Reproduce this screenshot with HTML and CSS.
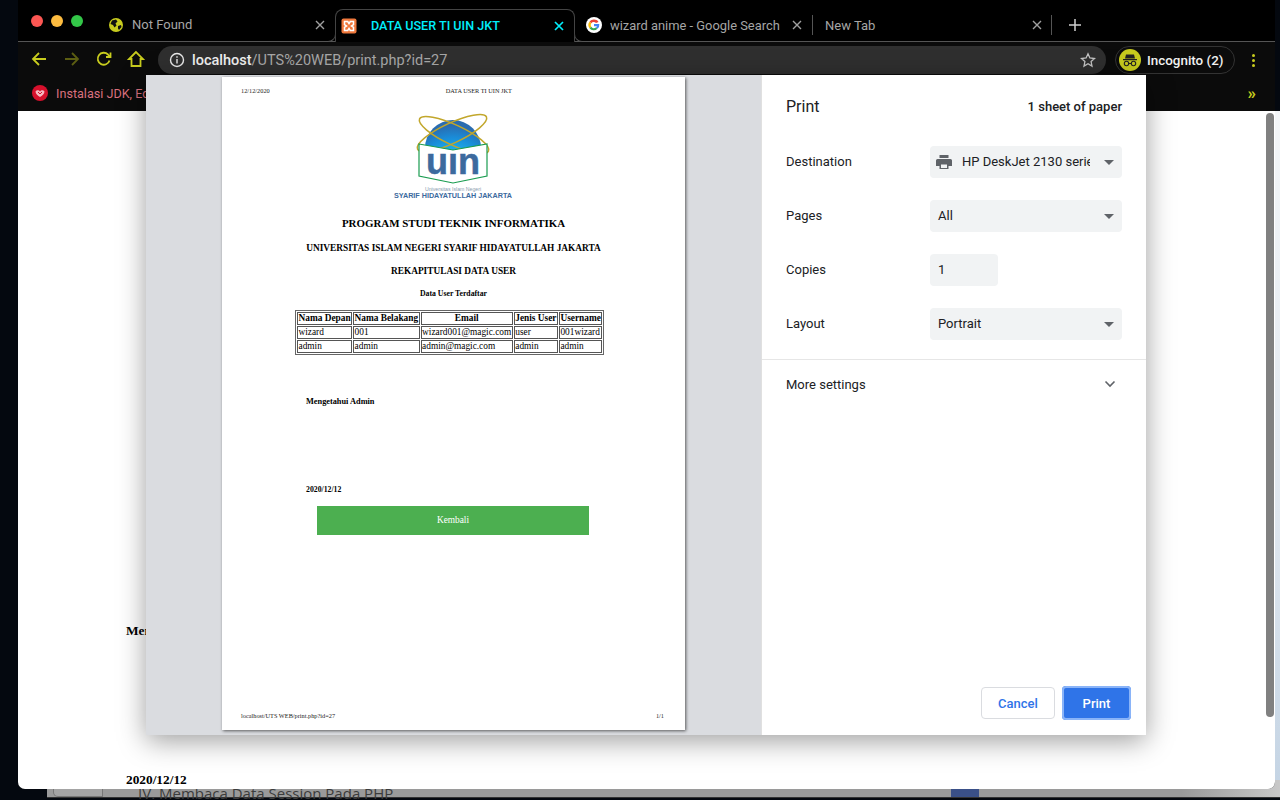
FILE: index.html
```html
<!DOCTYPE html>
<html lang="id">
<head>
<meta charset="utf-8">
<title>DATA USER TI UIN JKT</title>
<link rel="stylesheet" href="styles.css">
</head>
<body>
<div class="desktop">
  <div class="edge-light"></div>
  <div class="behind">
    <div class="behind-side"></div>
    <div class="behind-title">IV. Membaca Data Session Pada PHP</div>
    <div class="behind-blue"></div>
  </div>

  <div class="window">
    <div class="tabstrip">
      <div class="lights"><i class="light red"></i><i class="light amber"></i><i class="light green"></i></div>
      <div class="tab tab-first">
        <svg class="favicon" viewBox="0 0 16 16"><circle cx="8" cy="8" r="7" fill="#c8cc1e"/><path d="M4 3.500l4-1 1.500 2-2 2 1 2-2 2-1.500-2.500-2.500-1zM10 9l3-1 .5 2-2.500 3-1-1.500z" fill="#111"/></svg>
        <span class="tab-title">Not Found</span>
        <svg class="close" viewBox="0 0 10 10"><path d="M1 1l8 8M9 1l-8 8"/></svg>
      </div>
      <div class="tab tab-active">
        <svg class="favicon" viewBox="0 0 16 16"><rect x="0.500" y="0.500" width="15" height="15" rx="2" fill="#f0783c"/><path d="M3.500 3.500h3.200L8 5.500l1.300-2h3.200v3.200L10.500 8l2 1.300v3.200H9.300L8 10.500l-1.300 2H3.500V9.300L5.500 8l-2-1.300z" fill="none" stroke="#fff" stroke-width="1.500"/></svg>
        <span class="tab-title">DATA USER TI UIN JKT</span>
        <svg class="close" viewBox="0 0 10 10"><path d="M1 1l8 8M9 1l-8 8"/></svg>
      </div>
      <div class="tab tab-google">
        <svg class="favicon" viewBox="0 0 16 16"><circle cx="8" cy="8" r="8" fill="#fff"/><path d="M12.500 5a5.300 5.300 0 0 0-9-.2L5.300 6.200A3 3 0 0 1 10 5.900z" fill="#ea4335"/><path d="M3.500 4.800a5.300 5.300 0 0 0 0 6.400l1.800-1.400a3 3 0 0 1 0-3.600z" fill="#fbbc05"/><path d="M3.500 11.200a5.300 5.300 0 0 0 8 .6l-1.700-1.300a3 3 0 0 1-4.500-.7z" fill="#34a853"/><path d="M13.300 7H8v2.200h3a2.600 2.600 0 0 1-1.200 1.300l1.700 1.300A5.300 5.300 0 0 0 13.300 7z" fill="#4285f4"/></svg>
        <span class="tab-title">wizard anime - Google Search</span>
        <svg class="close" viewBox="0 0 10 10"><path d="M1 1l8 8M9 1l-8 8"/></svg>
      </div>
      <div class="tab tab-new">
        <span class="tab-title">New Tab</span>
        <svg class="close" viewBox="0 0 10 10"><path d="M1 1l8 8M9 1l-8 8"/></svg>
      </div>
      <svg class="plus" viewBox="0 0 14 14"><path d="M7 1v12M1 7h12"/></svg>
    </div>

    <div class="toolbar">
      <svg class="nav nav-back" viewBox="0 0 18 18"><path d="M16 9H3M9 3L3 9l6 6"/></svg>
      <svg class="nav nav-dim" viewBox="0 0 18 18"><path d="M2 9h13M9 3l6 6-6 6"/></svg>
      <svg class="nav" viewBox="0 0 18 18"><path d="M14.500 10.500A6 6 0 1 1 13 4.500L15 7M15.500 2.500V7H11"/></svg>
      <svg class="nav" viewBox="0 0 18 18"><path d="M9 2L2 9h2.500v7h9V9H16z"/></svg>
      <div class="omnibox">
        <svg class="info" viewBox="0 0 16 16"><circle cx="8" cy="8" r="6.500"/><path d="M8 7v4.500M8 4.200v1.600"/></svg>
        <span class="url"><b>localhost</b>/UTS%20WEB/print.php?id=27</span>
        <svg class="star" viewBox="0 0 16 16"><path d="M8 1.800l1.900 4.200 4.600.5-3.400 3.100.9 4.500L8 11.800l-4 2.300.9-4.500L1.500 6.500l4.600-.5z"/></svg>
      </div>
      <div class="incognito">
        <svg class="incog-icon" viewBox="0 0 22 22"><circle cx="11" cy="11" r="11" fill="#c8cc1e"/><path d="M7 5.500h8l1 4H6zM4 10h14v1.200H4z" fill="#222"/><circle cx="7.500" cy="14.500" r="2.200" fill="none" stroke="#222" stroke-width="1.100"/><circle cx="14.500" cy="14.500" r="2.200" fill="none" stroke="#222" stroke-width="1.100"/><path d="M9.700 14.500h2.600" stroke="#222" stroke-width="1"/></svg>
        <span>Incognito (2)</span>
      </div>
      <div class="kebab"><i></i><i></i><i></i></div>
    </div>

    <div class="bookmarks">
      <svg class="bm-icon" viewBox="0 0 16 16"><circle cx="8" cy="8" r="8" fill="#d6102c"/><path d="M3.500 6.500C5 4.500 7 5.500 8 6.500c1-1 3-2 4.500 0C12.500 9 10 11 8 12 6 11 3.500 9 3.500 6.500z" fill="#f6b8c0"/><path d="M6 7l2 2 2-2" stroke="#d6102c" fill="none"/></svg>
      <span class="bm-text">Instalasi JDK, Eclipse</span>
      <span class="bm-more">»</span>
    </div>

    <div class="content">
      <p class="content-line content-first">Mengetahui Admin</p>
      <p class="content-line content-date">2020/12/12</p>
      <div class="scrollbar"></div>
    </div>

    <div class="dialog">
      <div class="preview">
        <div class="sheet">
          <div class="sheet-head"><span>12/12/2020</span><span class="sheet-head-title">DATA USER TI UIN JKT</span></div>
          <svg class="logo" viewBox="0 0 136 92">
            <defs>
              <radialGradient id="globe" cx="50%" cy="95%" r="85%">
                <stop offset="0" stop-color="#35f4ff"/>
                <stop offset=".35" stop-color="#1cc0f2"/>
                <stop offset=".75" stop-color="#1a8cd8"/>
                <stop offset="1" stop-color="#2a6cb0"/>
              </radialGradient>
            </defs>
            <circle cx="68" cy="40" r="28" fill="url(#globe)"/>
            <g fill="none" stroke="#c2a72c" stroke-width="1.500">
              <ellipse cx="69" cy="27" rx="38" ry="10" transform="rotate(25 69 27)"/>
              <ellipse cx="67" cy="25" rx="38" ry="10" transform="rotate(-25 67 25)"/>
            </g>
            <path d="M34 36l34 6 34-6v32l-34 7-34-7z" fill="#fff" stroke="#1a9c50" stroke-width="1.200"/>
            <text class="logo-uin" x="68" y="66" text-anchor="middle" textLength="54" lengthAdjust="spacingAndGlyphs">uın</text>
            <text class="logo-small" x="68" y="82.500" text-anchor="middle">Universitas Islam Negeri</text>
            <text class="logo-name" x="68" y="89.500" text-anchor="middle">SYARIF HIDAYATULLAH JAKARTA</text>
          </svg>
          <h1 class="title-1">PROGRAM STUDI TEKNIK INFORMATIKA</h1>
          <h2 class="title-2">UNIVERSITAS ISLAM NEGERI SYARIF HIDAYATULLAH JAKARTA</h2>
          <h3 class="title-3">REKAPITULASI DATA USER</h3>
          <h5 class="title-5">Data User Terdaftar</h5>
          <table class="users">
            <tr><th>Nama Depan</th><th>Nama Belakang</th><th>Email</th><th>Jenis User</th><th>Username</th></tr>
            <tr><td>wizard</td><td>001</td><td>wizard001@magic.com</td><td>user</td><td>001wizard</td></tr>
            <tr><td>admin</td><td>admin</td><td>admin@magic.com</td><td>admin</td><td>admin</td></tr>
          </table>
          <p class="sign sign-admin">Mengetahui Admin</p>
          <p class="sign sign-date">2020/12/12</p>
          <div class="back-btn">Kembali</div>
          <div class="sheet-foot"><span>localhost/UTS WEB/print.php?id=27</span><span>1/1</span></div>
        </div>
      </div>
      <div class="settings">
        <div class="settings-head"><span class="settings-title">Print</span><span class="settings-count">1 sheet of paper</span></div>
        <div class="row">
          <span class="row-label">Destination</span>
          <div class="select select-dest">
            <svg class="printer" viewBox="0 0 18 18"><path d="M4.500 2h9v3h-9zM2.500 6h13A1.500 1.500 0 0 1 17 7.500V13h-3.500v3h-9v-3H1V7.500A1.500 1.500 0 0 1 2.500 6z" fill="#5f6368"/><path d="M6 11.500h6V15H6z" fill="#f1f3f4"/></svg>
            <span class="select-clip">HP DeskJet 2130 series</span>
            <i class="caret"></i>
          </div>
        </div>
        <div class="row"><span class="row-label">Pages</span><div class="select"><span class="select-text">All</span><i class="caret"></i></div></div>
        <div class="row"><span class="row-label">Copies</span><div class="select select-copies"><span class="select-text">1</span></div></div>
        <div class="row"><span class="row-label">Layout</span><div class="select"><span class="select-text">Portrait</span><i class="caret"></i></div></div>
        <div class="more">
          <span>More settings</span>
          <svg class="chevron" viewBox="0 0 12 8"><path d="M1.500 1.500L6 6l4.500-4.500"/></svg>
        </div>
        <div class="actions">
          <div class="btn btn-cancel">Cancel</div>
          <div class="btn btn-print">Print</div>
        </div>
      </div>
    </div>
  </div>
</div>
</body>
</html>
```
FILE: styles.css
```css
* { box-sizing: border-box; }
html, body { margin: 0; padding: 0; }
body { font-family: "Roboto", "Liberation Sans", sans-serif; }

.desktop {
  position: relative;
  width: 1280px;
  height: 800px;
  overflow: hidden;
  background: #04080f;
}
.edge-light {
  position: absolute;
  right: 0;
  top: 111px;
  width: 5px;
  height: 678px;
  background: linear-gradient(180deg, #f4f6f8 0%, #dfe6ee 60%, #c4d4e4 100%);
}

/* window behind */
.behind {
  position: absolute;
  left: 47px;
  top: 780px;
  width: 1233px;
  height: 18px;
  background: linear-gradient(90deg, #9a9a9a 0%, #9a9a9a 92%, #c8c8c8 100%);
  border-bottom: 1px solid #333;
}
.behind-side {
  position: absolute;
  left: 6px;
  top: 0;
  width: 50px;
  height: 17px;
  background: #a4a4a4;
  border: 1px solid #777;
  border-top: 0;
  border-radius: 0 0 0 5px;
}
.behind-title {
  position: absolute;
  left: 91px;
  top: 3px;
  font: 15px/20px "Open Sans", sans-serif;
  color: #3c3c3c;
  white-space: nowrap;
}
.behind-blue {
  position: absolute;
  left: 904px;
  top: 0;
  width: 28px;
  height: 17px;
  background: #3a5088;
}

/* main window */
.window {
  position: absolute;
  left: 18px;
  top: 0;
  width: 1257px;
  height: 789px;
  display: flex;
  flex-direction: column;
  background: #0b0b0b;
  border-radius: 0 0 7px 7px;
  overflow: hidden;
}

.tabstrip {
  height: 42px;
  flex: none;
  display: flex;
  align-items: flex-end;
  background: #000;
  border-bottom: 1px solid #555;
  padding-left: 13px;
}
.lights {
  display: flex;
  gap: 8px;
  width: 69px;
  align-self: flex-start;
  padding-top: 15px;
}
.light { width: 12px; height: 12px; border-radius: 50%; display: block; }
.red { background: #fc5753; }
.amber { background: #fdbc40; }
.green { background: #33c748; }

.tab {
  position: relative;
  height: 33px;
  display: flex;
  align-items: center;
  font-size: 13px;
  color: #a6a6a6;
  white-space: nowrap;
}
.favicon { width: 16px; height: 16px; flex: none; }
.tab-title { flex: 1; overflow: hidden; }
.close {
  width: 10px;
  height: 10px;
  flex: none;
  fill: none;
  stroke: #a0a0a0;
  stroke-width: 1.400;
}
.tab-first { width: 235px; padding: 0 10px 0 8px; gap: 8px; }
.tab-active {
  width: 240px;
  height: 33px;
  margin-bottom: -1px;
  padding: 0 10px 1px 5px;
  gap: 14px;
  color: #00eefc;
  font-weight: 500;
  font-size: 12.600px;
  background: #000;
  border: 1px solid #444;
  border-bottom: 0;
  border-radius: 8px 8px 0 0;
}
.tab-active::before,
.tab-active::after {
  content: "";
  position: absolute;
  bottom: 0;
  width: 8px;
  height: 8px;
  background: #000;
  border-bottom: 1px solid #555;
}
.tab-active::before { left: -9px; border-right: 1px solid #444; border-radius: 0 0 8px 0; }
.tab-active::after { right: -9px; border-left: 1px solid #444; border-radius: 0 0 0 8px; }
.tab-active .close { stroke: #00eefc; stroke-width: 1.700; }
.tab-google { width: 238px; padding: 0 10px 0 11px; gap: 8px; border-right: 1px solid #555; height: 20px; margin-bottom: 6px; font-size: 12.900px; }
.tab-new { width: 239px; padding: 0 9px 0 12px; border-right: 1px solid #555; height: 20px; margin-bottom: 6px; }
.plus {
  width: 14px;
  height: 14px;
  margin: 0 0 9px 16px;
  fill: none;
  stroke: #cfcfcf;
  stroke-width: 1.500;
}

.toolbar {
  height: 33px;
  flex: none;
  display: flex;
  align-items: center;
  padding-left: 5px;
}
.nav {
  width: 32px;
  height: 18px;
  flex: none;
  fill: none;
  stroke: #c8cc1e;
  stroke-width: 1.800;
}
.nav-back { margin-right: 1px; }
.nav-dim { stroke: #5c5e12; }
.omnibox {
  width: 948px;
  height: 28px;
  margin: 4px 0 0 6px;
  align-self: flex-start;
  flex: none;
  display: flex;
  align-items: center;
  background: #2f2f2f;
  border-radius: 14px;
  padding: 0 10px 0 11px;
}
.info { width: 16px; height: 16px; fill: none; stroke: #e8e8e8; stroke-width: 1.400; flex: none; }
.url { flex: 1; margin-left: 7px; font-size: 14.500px; color: #a8a8a8; white-space: nowrap; }
.url b { font-weight: 500; color: #f0f0f0; }
.star { width: 16px; height: 16px; fill: none; stroke: #c4c4c4; stroke-width: 1.300; flex: none; }
.incognito {
  width: 120px;
  height: 28px;
  margin: 4px 0 0 9px;
  align-self: flex-start;
  flex: none;
  display: flex;
  align-items: center;
  gap: 6px;
  padding-left: 3px;
  border: 1px solid #333;
  border-radius: 14px;
  color: #f2f2f2;
  font-size: 13.400px;
  font-weight: 500;
  white-space: nowrap;
}
.incog-icon { width: 22px; height: 22px; flex: none; }
.kebab {
  margin-left: 17px;
  margin-top: 4px;
  display: flex;
  flex-direction: column;
  gap: 2px;
}
.kebab i { display: block; width: 3px; height: 3px; border-radius: 50%; background: #c8cc1e; }

.bookmarks {
  height: 36px;
  flex: none;
  display: flex;
  align-items: center;
  padding: 0 19px 0 14px;
  font-size: 12.600px;
}
.bm-icon { width: 16px; height: 16px; flex: none; }
.bm-text { margin-left: 8px; color: #d9707e; white-space: nowrap; }
.bm-more { margin-left: auto; color: #c8cc1e; font-size: 17px; font-weight: 700; line-height: 16px; }

.content {
  position: relative;
  flex: 1;
  background: #fff;
  padding: 512px 0 0 108px;
  font-family: "Liberation Serif", serif;
  font-weight: 700;
  font-size: 13.330px;
  line-height: 16px;
  color: #000;
}
.content-line { margin: 0; }
.content-date { margin-top: 133px; }
.scrollbar {
  position: absolute;
  right: 1px;
  top: 2px;
  width: 8px;
  height: 604px;
  background: #808080;
  border-radius: 4px;
}

/* print dialog */
.dialog {
  position: absolute;
  left: 128px;
  top: 75px;
  width: 1000px;
  height: 660px;
  display: flex;
  background: #fff;
  box-shadow: 0 6px 26px rgba(0, 0, 0, .38);
}
.preview {
  width: 615px;
  flex: none;
  background: #dadce0;
  padding: 2px 0 0 76px;
}
.sheet {
  width: 463px;
  height: 653px;
  display: flex;
  flex-direction: column;
  background: #fff;
  box-shadow: 1px 1px 3px rgba(0, 0, 0, .6);
  padding-top: 10px;
  font-family: "Liberation Serif", serif;
  color: #000;
}
.sheet-head {
  display: flex;
  padding-left: 19px;
  font-size: 6.300px;
  line-height: 8px;
  color: #222;
}
.sheet-head-title { margin-left: 176px; }
.logo { display: block; width: 136px; height: 92px; margin: 13px 0 0 163px; flex: none; }
.logo-uin { font: 700 36px "Liberation Sans", sans-serif; fill: #3c6a9e; stroke: #3c6a9e; stroke-width: .5; }
.logo-small { font: 5.200px "Liberation Sans", sans-serif; fill: #8a9bb0; }
.logo-name { font: 700 7.200px "Liberation Sans", sans-serif; fill: #3c6a9e; }
.title-1, .title-2, .title-3, .title-5 { margin: 0; text-align: center; font-weight: 700; }
.title-1 { margin-top: 16px; font-size: 10.930px; line-height: 14px; }
.title-2 { margin-top: 11px; font-size: 9.340px; line-height: 14px; }
.title-3 { margin-top: 9px; font-size: 9.340px; line-height: 14px; }
.title-5 { margin-top: 11px; font-size: 7.750px; line-height: 10px; }
.users {
  width: 309px;
  margin: 11px 0 0 73px;
  border: 1px solid #666;
  border-spacing: 1px;
  font-size: 9.340px;
  line-height: 11px;
}
.users th, .users td { border: 1px solid #555; padding: 0 0.500px; white-space: nowrap; height: 13px; }
.users td { font-weight: 400; text-align: left; }
.sign { margin: 0 0 0 84px; font-size: 7.750px; line-height: 10px; font-weight: 700; }
.sign-admin { margin-top: 42px; font-size: 8.300px; }
.sign-date { margin-top: 78px; }
.back-btn {
  width: 272px;
  height: 29px;
  margin: 11px 0 0 95px;
  padding-bottom: 2px;
  flex: none;
  display: flex;
  align-items: center;
  justify-content: center;
  background: #4caf50;
  color: #fff;
  font-size: 9.340px;
}
.sheet-foot {
  margin-top: auto;
  display: flex;
  justify-content: space-between;
  padding: 0 21px 10px 19px;
  font-size: 6.300px;
  line-height: 8px;
  color: #222;
}

.settings {
  flex: 1;
  display: flex;
  flex-direction: column;
  border-left: 1px solid #e0e0e0;
  font-size: 13px;
  color: #202124;
}
.settings-head {
  height: 32px;
  margin: 15px 0 24px;
  padding: 0 24px;
  display: flex;
  align-items: center;
  justify-content: space-between;
}
.settings-title { font-size: 16px; }
.settings-count { font-weight: 500; font-size: 13px; }
.row {
  height: 32px;
  flex: none;
  display: flex;
  align-items: center;
  padding-left: 24px;
  margin-bottom: 22px;
}
.row-label { width: 144px; flex: none; padding-bottom: 2px; }
.select {
  position: relative;
  width: 192px;
  height: 32px;
  display: flex;
  align-items: center;
  background: #f1f3f4;
  border-radius: 4px;
}
.select-copies { width: 68px; }
.select-text { padding: 0 0 2px 8px; }
.printer { width: 18px; height: 18px; margin-left: 5px; flex: none; }
.select-clip { width: 128px; margin-left: 9px; padding-bottom: 2px; overflow: hidden; white-space: nowrap; }
.caret {
  position: absolute;
  right: 8px;
  top: 14px;
  width: 0;
  height: 0;
  border-left: 5px solid transparent;
  border-right: 5px solid transparent;
  border-top: 5px solid #5f6368;
}
.more {
  height: 49px;
  flex: none;
  margin-top: -3px;
  display: flex;
  align-items: center;
  justify-content: space-between;
  padding: 0 30px 0 24px;
  border-top: 1px solid #e6e6e6;
}
.chevron { width: 12px; height: 8px; fill: none; stroke: #5f6368; stroke-width: 1.600; }
.actions {
  margin-top: auto;
  display: flex;
  align-items: center;
  justify-content: flex-end;
  gap: 7px;
  padding: 0 15px 15px 0;
}
.btn {
  display: flex;
  align-items: center;
  justify-content: center;
  border-radius: 4px;
  font-weight: 500;
}
.btn-cancel { width: 74px; height: 32px; border: 1px solid #dadce0; color: #2f74e8; }
.btn-print {
  width: 69px;
  height: 34px;
  background: #2f74e8;
  color: #fff;
  box-shadow: inset 0 0 0 2px #8ab4f8;
}
```
